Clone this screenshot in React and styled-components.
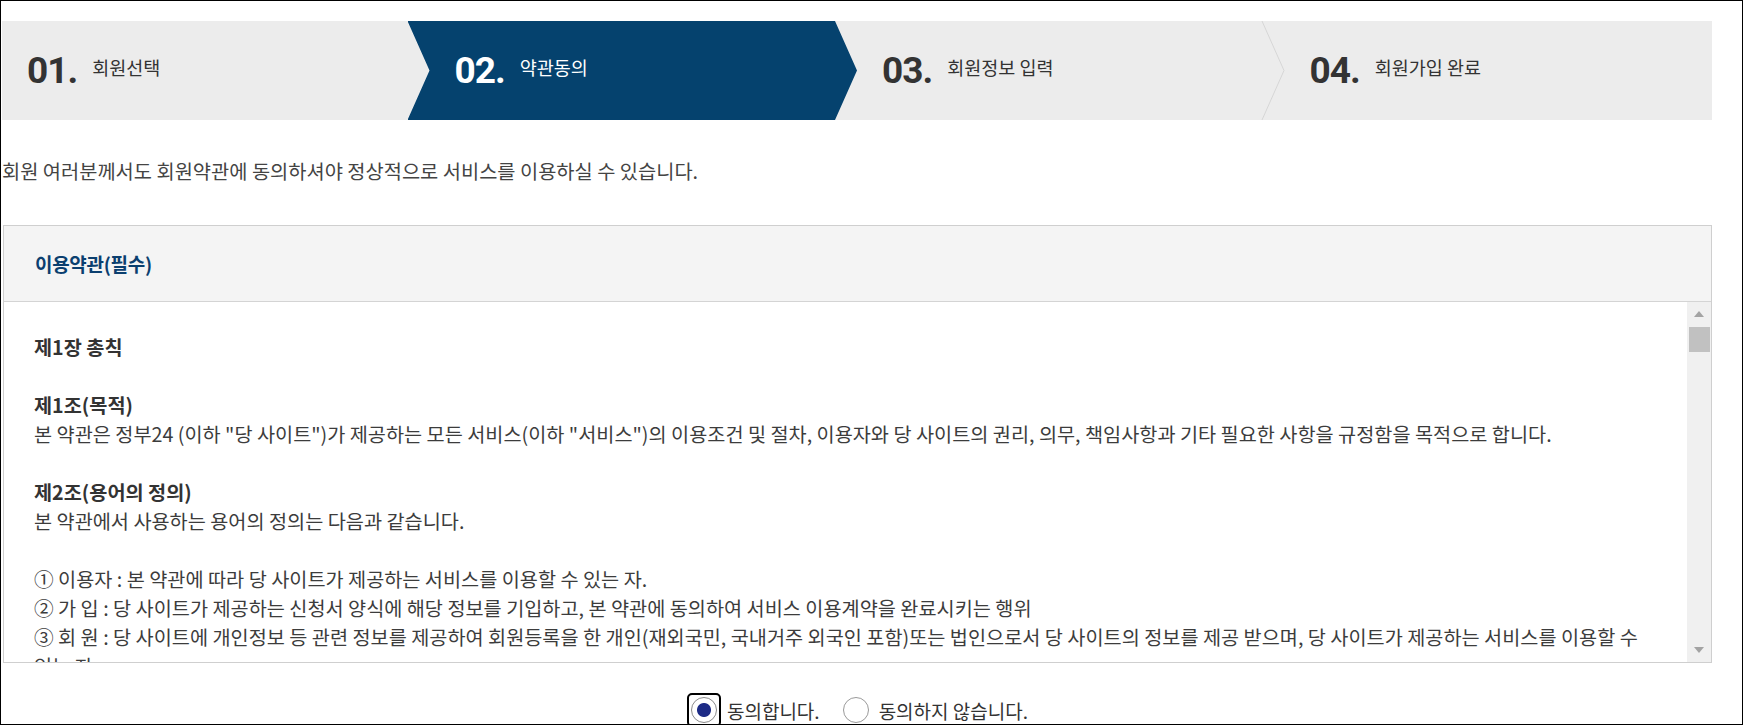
import React from 'react'
import styled, { createGlobalStyle, css } from 'styled-components'

const GlobalStyle = createGlobalStyle`
    html, body {
        margin: 0;
        padding: 0;
    }

    body {
        font-family: "Noto Sans CJK KR", "Noto Sans", sans-serif;
        color: #333;
        background: #fff;
    }
`

const Frame = styled.div`
    box-sizing: border-box;
    height: 100vh;
    border: 1px solid #000;
    overflow: hidden;
    padding: 20px 30px 0 1px;
`

const StepBar = styled.ol`
    display: flex;
    height: 99px;
    margin: 0;
    padding: 0;
    list-style: none;
    background-color: #ececec;
`

const Step = styled.li`
    position: relative;
    flex: 1;
    display: flex;
    align-items: center;
    padding-left: 25px;
    color: ${props => props.$active ? '#fff' : '#333'};

    ${props => props.$active && css`
        &::before {
            content: '';
            position: absolute;
            top: 0;
            bottom: 0;
            left: -22px;
            right: 0;
            background-color: #05426e;
            clip-path: polygon(0 0, calc(100% - 22px) 0, 100% 50%, calc(100% - 22px) 100%, 0 100%, 22px 50%);
        }
    `}
`

const StepNum = styled.span`
    position: relative;
    font-family: Roboto, "Liberation Sans", sans-serif;
    font-weight: 700;
    font-size: 37px;
    line-height: 1;
    letter-spacing: -1px;
`

const StepLabel = styled.span`
    position: relative;
    margin-left: 15px;
    margin-bottom: 6px;
    font-size: 18.5px;
    line-height: 1;
`

const Divider = styled.svg`
    position: absolute;
    top: 0;
    right: 0;
    width: 24px;
    height: 100%;
`

const Intro = styled.p`
    margin: 37px 0 0;
    font-size: 19.8px;
    line-height: 27px;
    color: #444;
`

const TermsBox = styled.section`
    margin: 41px 0 0 1px;
    border: 1px solid #cfcfcf;
`

const TermsHeader = styled.h3`
    display: flex;
    align-items: center;
    height: 75px;
    margin: 0;
    padding: 0 31px;
    background-color: #f4f4f4;
    border-bottom: 1px solid #d4d4d4;
    color: #0b3f6f;
    font-size: 19px;
    font-weight: 700;
    letter-spacing: -0.3px;
`

const TermsPanel = styled.div`
    display: flex;
    height: 360px;
`

const TermsBody = styled.div`
    flex: 1;
    overflow-y: auto;
    scrollbar-width: none;
    padding: 30px 30px 0 30px;
    box-sizing: border-box;
    font-size: 19.7px;
    line-height: 29px;
    color: #3c3c3c;
`

const ScrollBar = styled.div`
    display: flex;
    flex-direction: column;
    width: 24px;
    background-color: #f0f0f0;
`

const ScrollArrow = styled.div`
    display: flex;
    justify-content: center;
    align-items: center;
    height: 24px;

    &::after {
        content: '';
        border-left: 5.5px solid transparent;
        border-right: 5.5px solid transparent;
        ${props => props.$down
            ? css`border-top: 6px solid #a3a3a3;`
            : css`border-bottom: 6px solid #a3a3a3;`}
    }
`

const ScrollThumb = styled.div`
    height: 25px;
    margin: 1px 1px 0 2px;
    background-color: #c1c1c1;
`

const ScrollSpace = styled.div`
    flex: 1;
`

const ChapterTitle = styled.h4`
    margin: 0 0 29px;
    font-size: inherit;
    font-weight: 700;
    line-height: 29px;
    color: #333;
`

const Article = styled.div`
    margin-bottom: 29px;
`

const ArticleTitle = styled.h5`
    margin: 0;
    font-size: inherit;
    font-weight: 700;
    line-height: 29px;
    color: #333;
`

const Line = styled.p`
    margin: 0 0 ${props => props.$spaced ? '29px' : '0'};
`

const RadioRow = styled.div`
    display: flex;
    justify-content: center;
    align-items: center;
    margin-top: 30px;
    margin-left: 1px;
`

const RadioOption = styled.label`
    display: flex;
    align-items: center;
    margin-right: 19px;
    font-size: 19px;
    color: #333;

    &:last-child {
        margin-right: 0;
    }
`

const RadioRing = styled.span`
    display: inline-flex;
    padding: 2px;
    border: 2px solid ${props => props.$focused ? '#000' : 'transparent'};
    border-radius: 5px;
    margin-right: 6px;
`

const RadioInput = styled.input`
    appearance: none;
    width: 26px;
    height: 26px;
    margin: 0;
    border: 1.5px solid #9a9a9a;
    border-radius: 50%;
    background: #fff;
    box-sizing: border-box;

    &:checked {
        border-color: #8a8a8a;
        background: radial-gradient(circle, #1d2b86 0 6.5px, #fff 7.5px);
    }
`

const terms = [
    { chapter: '제1장 총칙' },
    {
        title: '제1조(목적)',
        lines: ['본 약관은 정부24 (이하 "당 사이트")가 제공하는 모든 서비스(이하 "서비스")의 이용조건 및 절차, 이용자와 당 사이트의 권리, 의무, 책임사항과 기타 필요한 사항을 규정함을 목적으로 합니다.']
    },
    {
        title: '제2조(용어의 정의)',
        lead: '본 약관에서 사용하는 용어의 정의는 다음과 같습니다.',
        lines: [
            '① 이용자 : 본 약관에 따라 당 사이트가 제공하는 서비스를 이용할 수 있는 자.',
            '② 가 입 : 당 사이트가 제공하는 신청서 양식에 해당 정보를 기입하고, 본 약관에 동의하여 서비스 이용계약을 완료시키는 행위',
            '③ 회 원 : 당 사이트에 개인정보 등 관련 정보를 제공하여 회원등록을 한 개인(재외국민, 국내거주 외국인 포함)또는 법인으로서 당 사이트의 정보를 제공 받으며, 당 사이트가 제공하는 서비스를 이용할 수 있는 자.',
            '④ 아이디(ID) : 회원의 식별과 서비스 이용을 위하여 회원이 문자와 숫자의 조합으로 설정한 고유의 체계',
            '⑤ 비밀번호 : 이용자와 회원ID가 일치하는지를 확인하고 통신상의 자신의 비밀보호를 위하여 이용자 자신이 선정한 문자와 숫자의 조합.',
            '⑥ 탈 퇴 : 회원이 이용계약을 종료 시키는 행위',
            '⑦ 본 약관에서 정의하지 않은 용어는 개별서비스에 대한 별도약관 및 이용규정에서 정의합니다.'
        ]
    },
    {
        title: '제3조(약관의 효력과 변경)',
        lines: [
            '① 당 사이트는 이용자가 본 약관 내용에 동의하는 것을 조건으로 이용자에게 서비스를 제공하며, 당 사이트의 서비스 제공 행위 및 이용자의 서비스 사용 행위에는 본 약관을 우선적으로 적용하겠습니다.',
            '② 당 사이트는 본 약관을 사전 고지 없이 변경할 수 있으며, 변경된 약관은 당 사이트 내에 공지함으로써 이용자가 직접 확인하도록 할 것입니다. 이용자가 변경된 약관에 동의하지 아니하는 경우 본인의 회원등록을 취소(회원탈퇴)할 수 있으며, 계속 사용할 경우에는 약관 변경에 대한 암묵적 동의로 간주됩니다. 변경된 약관은 공지와 동시에 그 효력을 발휘합니다.'
        ]
    },
    {
        title: '제4조(약관 외 준칙)',
        lines: ['본 약관에 명시되지 않은 사항은 전기통신기본법, 전기통신사업법, 정보통신망 이용촉진 및 정보보호 등에 관한 법률 및 기타 관련 법령의 규정에 의합니다.']
    },
    { chapter: '제2장 서비스 이용계약' },
    {
        title: '제5조(이용계약의 성립)',
        lines: [
            '① 이용계약은 이용자의 이용신청에 대한 당 사이트의 이용승낙과 이용자의 약관 내용에 대한 동의로 성립됩니다.',
            '② 회원에 가입하여 서비스를 이용하고자 하는 희망자는 당 사이트에서 요청하는 개인 신상정보를 제공해야 합니다.',
            '③ 이용자의 이용신청에 대하여 당 사이트가 이를 승낙한 경우, 당 사이트는 회원 ID와 기타 당 사이트가 필요하다고 인정하는 내용을 이용자에게 통지합니다.',
            '④ 가입할 때 입력한 ID는 변경할 수 없으며, 한 사람에게 오직 한 개의 ID가 발급됩니다.',
            '⑤ 당 사이트는 다음 각 호에 해당하는 이용계약에 대하여는 가입을 취소할 수 있습니다.',
            '1. 다른 사람의 명의를 사용하여 신청하였을 때',
            '2. 이용계약 신청서의 내용을 허위로 기재하였거나 신청하였을 때',
            '3. 다른 사람의 당 사이트 서비스 이용을 방해하거나 그 정보를 도용하는 등의 행위를 하였을 때',
            '4. 당 사이트를 이용하여 법령과 본 약관이 금지하는 행위를 하는 경우',
            '5. 기타 당 사이트가 정한 이용신청요건이 미비 되었을 때'
        ]
    },
    {
        title: '제6조(회원정보 사용에 대한 동의)',
        lines: [
            '① 회원의 개인정보는 공공기관의 개인정보보호법에 의해 보호되며 당 사이트의 개인정보처리방침이 적용됩니다.',
            '② 당 사이트의 회원 정보는 다음과 같이 수집, 사용, 관리, 보호됩니다.',
            '1. 개인정보의 수집 : 당 사이트는 회원 가입시 회원이 제공하는 정보를 수집합니다.',
            '2. 개인정보의 사용 : 당 사이트는 서비스 제공과 관련해서 수집된 회원정보를 본인의 승낙 없이 제3자에게 누설, 배포하지 않습니다. 단, 전기통신기본법 등 법률의 규정에 의해 국가기관의 요구가 있는 경우, 범죄에 대한 수사상의 목적이 있거나 정보통신윤리 위원회의 요청이 있는 경우 또는 기타 관계법령에서 정한 절차에 따른 요청이 있는 경우, 회원이 당 사이트에 제공한 개인정보를 스스로 공개한 경우에는 그러하지 않습니다.',
            '3. 개인정보의 관리 : 회원은 개인정보의 보호 및 관리를 위하여 서비스의 개인정보관리에서 수시로 회원의 개인정보를 수정/삭제할 수 있습니다.',
            '4. 개인정보의 보호 : 회원의 개인정보는 오직 회원만이 열람/수정/삭제 할 수 있으며, 이는 전적으로 회원의 ID와 비밀번호에 의해 관리되고 있습니다. 따라서 타인에게 본인의 ID와 비밀번호를 알려주어서는 아니 되며, 작업 종료 시에는 반드시 로그아웃 해 주시기 바랍니다.',
            '③ 회원이 본 약관에 따라 이용신청을 하는 것은 당 사이트가 신청서에 기재된 회원정보를 수집, 이용하는 것에 동의하는 것으로 간주됩니다.'
        ]
    },
    {
        title: '제7조(사용자의 정보 보안)',
        lines: [
            '① 가입 신청자가 당 사이트 서비스 가입 절차를 완료하는 순간부터 회원은 입력한 정보의 비밀을 유지할 책임이 있으며, 회원의 ID와 비밀번호를 사용하여 발생하는 모든 결과에 대한 책임은 회원본인에게 있습니다.',
            '② ID와 비밀번호에 관한 모든 관리의 책임은 회원에게 있으며, 회원의 ID나 비밀번호가 부정하게 사용되었다는 사실을 발견한 경우에는 즉시 당 사이트에 신고하여야 합니다. 신고를 하지 않음으로 인한 모든 책임은 회원 본인에게 있습니다.',
            '③ 이용자는 당 사이트 서비스의 사용 종료시 마다 정확히 접속을 종료하도록 해야 하며, 정확히 종료하지 아니함으로써 제3자가 이용자에 관한 정보를 이용하게 되는 등의 결과로 인해 발생하는 손해 및 손실에 대하여 당 사이트는 책임을 부담하지 아니합니다.'
        ]
    },
    {
        title: '제8조(서비스의 중지)',
        lines: ['① 당 사이트는 이용자가 본 약관의 내용에 위배되는 행동을 한 경우, 임의로 서비스 사용을 제한 및 중지할 수 있습니다.']
    },
    {
        title: '제9조(서비스의 변경 및 해지)',
        lines: [
            '① 당 사이트는 이용자가 서비스를 이용하여 기대하는 손익이나 서비스를 통하여 얻은 자료로 인한 손해에 관하여 책임을 지지 않으며, 회원이 본 서비스에 게재한 정보, 자료, 사실의 신뢰도 및 정확성 등 내용에 관하여는 책임을 지지 않습니다.',
            '② 당 사이트는 서비스 이용과 관련하여 가입자에게 발생한 손해 중 가입자의 고의, 과실에 의한 손해에 대하여 책임을 부담하지 아니합니다.'
        ]
    },
    {
        title: '제10조(게시물의 저작권)',
        lines: [
            '① 게시물이라 함은 게시판에 이용자가 게재한 글, 사진, 각종 파일과 링크 등을 말합니다.',
            '② 회원이 게시한 게시물의 저작권은 게시한 회원에게 있으며, 당 사이트는 이를 서비스 내에서 게재할 수 있는 권리를 가집니다.',
            '③ 당 사이트는 회원이 게시한 게시물이 다른 이용자를 비방하거나 허위 사실을 유포하여 명예를 손상시키는 내용인 경우 사전 통지 없이 삭제할 수 있습니다.'
        ]
    },
    { chapter: '제3장 의무 및 책임' },
    {
        title: '제11조(당 사이트의 의무)',
        lines: [
            '① 당 사이트는 법령과 본 약관이 금지하거나 미풍양속에 반하는 행위를 하지 않으며, 계속적·안정적으로 서비스를 제공하기 위해 노력할 의무가 있습니다.',
            '② 당 사이트는 회원의 개인 신상 정보를 본인의 승낙 없이 타인에게 누설, 배포하지 않습니다. 다만, 전기통신관련법령 등 관계법령에 의하여 관계 국가기관 등의 요구가 있는 경우에는 그러하지 아니합니다.'
        ]
    },
    {
        title: '제12조(회원의 의무)',
        lines: [
            '① 회원 가입시에 요구되는 정보는 정확하게 기입하여야 합니다. 또한 이미 제공된 회원에 대한 정보가 정확한 정보가 되도록 유지, 갱신하여야 하며, 회원은 자신의 ID 및 비밀번호를 제3자에게 이용하게 해서는 안됩니다.',
            '② 회원은 당 사이트의 사전 승낙 없이 서비스를 이용하여 어떠한 영리행위도 할 수 없습니다.',
            '③ 회원은 당 사이트 서비스를 이용하여 얻은 정보를 당 사이트의 사전승낙 없이 복사, 복제, 변경, 번역, 출판·방송 기타의 방법으로 사용하거나 이를 타인에게 제공할 수 없습니다.'
        ]
    },
    {
        title: '부칙',
        lines: ['본 약관은 게시한 날로부터 시행합니다.']
    }
]

const steps = [
    { num: '01.', label: '회원선택' },
    { num: '02.', label: '약관동의', active: true },
    { num: '03.', label: '회원정보 입력', divider: true },
    { num: '04.', label: '회원가입 완료' }
]

class App extends React.Component {
    state = {
        agree: 'yes'
    }

    onChangeAgree = (event) => {
        this.setState({ agree: event.target.value })
    }

    render() {
        const listaDeTermos = terms.map((item, i) => {
            if (item.chapter) {
                return <ChapterTitle key={i}>{item.chapter}</ChapterTitle>
            }
            return (
                <Article key={i}>
                    <ArticleTitle>{item.title}</ArticleTitle>
                    {item.lead && <Line $spaced>{item.lead}</Line>}
                    {item.lines.map((line, j) => <Line key={j}>{line}</Line>)}
                </Article>
            )
        })

        return (
            <Frame>
                <GlobalStyle />
                <StepBar>
                    {steps.map(step => (
                        <Step key={step.num} $active={step.active}>
                            <StepNum>{step.num}</StepNum>
                            <StepLabel>{step.label}</StepLabel>
                            {step.divider && (
                                <Divider viewBox="0 0 24 100" preserveAspectRatio="none">
                                    <polyline points="1,0 23,50 1,100" fill="none" stroke="#d6d6d6" strokeWidth="1" vectorEffect="non-scaling-stroke" />
                                </Divider>
                            )}
                        </Step>
                    ))}
                </StepBar>

                <Intro>회원 여러분께서도 회원약관에 동의하셔야 정상적으로 서비스를 이용하실 수 있습니다.</Intro>

                <TermsBox>
                    <TermsHeader>이용약관(필수)</TermsHeader>
                    <TermsPanel>
                        <TermsBody>{listaDeTermos}</TermsBody>
                        <ScrollBar>
                            <ScrollArrow />
                            <ScrollThumb />
                            <ScrollSpace />
                            <ScrollArrow $down />
                        </ScrollBar>
                    </TermsPanel>
                </TermsBox>

                <RadioRow>
                    <RadioOption>
                        <RadioRing $focused>
                            <RadioInput type="radio" name="agree" value="yes" checked={this.state.agree === 'yes'} onChange={this.onChangeAgree} />
                        </RadioRing>
                        동의합니다.
                    </RadioOption>
                    <RadioOption>
                        <RadioRing>
                            <RadioInput type="radio" name="agree" value="no" checked={this.state.agree === 'no'} onChange={this.onChangeAgree} />
                        </RadioRing>
                        동의하지 않습니다.
                    </RadioOption>
                </RadioRow>
            </Frame>
        )
    }
}

export default App
